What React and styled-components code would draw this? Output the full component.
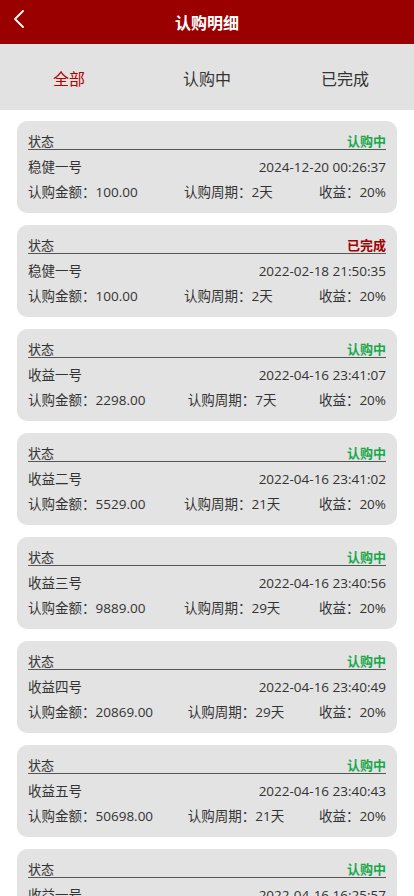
import styled, { createGlobalStyle } from "styled-components";

const GlobalStyle = createGlobalStyle`
  body {
    margin: 0;
    background: #fff;
    font-family: "Open Sans", "Noto Sans CJK SC", sans-serif;
    color: #333;
  }
`;

const records = [
  { name: "稳健一号", time: "2024-12-20 00:26:37", amount: "100.00", days: 2, done: false },
  { name: "稳健一号", time: "2022-02-18 21:50:35", amount: "100.00", days: 2, done: true },
  { name: "收益一号", time: "2022-04-16 23:41:07", amount: "2298.00", days: 7, done: false },
  { name: "收益二号", time: "2022-04-16 23:41:02", amount: "5529.00", days: 21, done: false },
  { name: "收益三号", time: "2022-04-16 23:40:56", amount: "9889.00", days: 29, done: false },
  { name: "收益四号", time: "2022-04-16 23:40:49", amount: "20869.00", days: 29, done: false },
  { name: "收益五号", time: "2022-04-16 23:40:43", amount: "50698.00", days: 21, done: false },
  { name: "收益一号", time: "2022-04-16 16:25:57", amount: "1000.00", days: 7, done: false },
];

const tabs = ["全部", "认购中", "已完成"];

export default function App() {
  return (
    <Page>
      <GlobalStyle />
      <Header>
        <Back>
          <svg width="14" height="20" viewBox="0 0 14 20" fill="none">
            <path d="M11 2 L3 10 L11 18" stroke="#fff" strokeWidth="1.8" strokeLinecap="round" strokeLinejoin="round" />
          </svg>
        </Back>
        <Title>认购明细</Title>
      </Header>
      <Tabs>
        {tabs.map((t, i) => (
          <Tab key={t} $active={i === 0}>{t}</Tab>
        ))}
      </Tabs>
      <List>
        {records.map((r, i) => (
          <Card key={i}>
            <StatusRow>
              <span>状态</span>
              <Status $done={r.done}>{r.done ? "已完成" : "认购中"}</Status>
            </StatusRow>
            <Row>
              <span>{r.name}</span>
              <span>{r.time}</span>
            </Row>
            <Row>
              <span>认购金额：{r.amount}</span>
              <span>认购周期：{r.days}天</span>
              <span>收益：20%</span>
            </Row>
          </Card>
        ))}
      </List>
    </Page>
  );
}

const Page = styled.div`
  width: 414px;
  min-height: 896px;
`;

const Header = styled.header`
  position: relative;
  height: 44px;
  background: #9b0000;
  display: flex;
  align-items: center;
  justify-content: center;
`;

const Back = styled.div`
  position: absolute;
  left: 12px;
  top: 9px;
  display: flex;
`;

const Title = styled.h1`
  margin: 0;
  color: #fff;
  font-family: "Noto Sans CJK SC", sans-serif;
  font-size: 16px;
  font-weight: bold;
`;

const Tabs = styled.nav`
  height: 66px;
  background: #e2e2e2;
  display: grid;
  grid-template-columns: repeat(3, 1fr);
  align-items: center;
`;

const Tab = styled.div`
  text-align: center;
  font-size: 16px;
  padding-top: 2px;
  color: ${(p) => (p.$active ? "#b00000" : "#333")};
`;

const List = styled.div`
  display: flex;
  flex-direction: column;
  gap: 12px;
  padding: 11px 17px 12px;
`;

const Card = styled.div`
  background: #e3e3e3;
  border-radius: 10px;
  padding: 12px 11px 8px;
  font-size: 13.5px;
`;

const StatusRow = styled.div`
  display: flex;
  justify-content: space-between;
  line-height: 16px;
  font-size: 13px;
  border-bottom: 1px solid #555;
  margin-bottom: 5px;
`;

const Status = styled.span`
  font-weight: bold;
  color: ${(p) => (p.$done ? "#a00000" : "#18a84a")};
`;

const Row = styled.div`
  display: flex;
  justify-content: space-between;
  line-height: 25px;
`;
